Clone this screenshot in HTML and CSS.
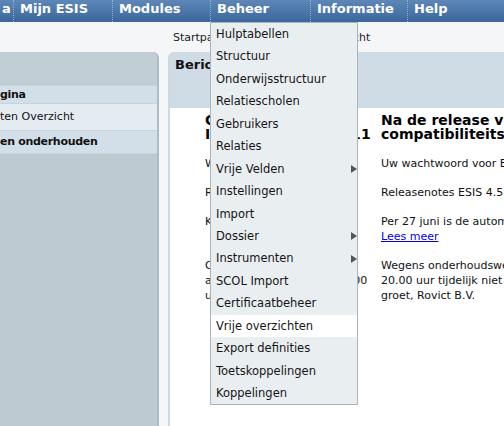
FILE: index.html
```html
<!DOCTYPE html>
<html lang="nl">
<head>
<meta charset="utf-8">
<title>ESIS - Berichten</title>
<link rel="stylesheet" href="styles.css">
</head>
<body>
<nav class="topnav">
  <div class="nav-item nav-first">a</div>
  <div class="nav-item w99">Mijn ESIS</div>
  <div class="nav-item w98">Modules</div>
  <div class="nav-item w100">Beheer
    <div class="dropdown">
      <div class="menu-item">Hulptabellen</div>
      <div class="menu-item">Structuur</div>
      <div class="menu-item">Onderwijsstructuur</div>
      <div class="menu-item">Relatiescholen</div>
      <div class="menu-item">Gebruikers</div>
      <div class="menu-item">Relaties</div>
      <div class="menu-item sub">Vrije Velden</div>
      <div class="menu-item">Instellingen</div>
      <div class="menu-item">Import</div>
      <div class="menu-item sub">Dossier</div>
      <div class="menu-item sub">Instrumenten</div>
      <div class="menu-item">SCOL Import</div>
      <div class="menu-item">Certificaatbeheer</div>
      <div class="menu-item active">Vrije overzichten</div>
      <div class="menu-item">Export definities</div>
      <div class="menu-item">Toetskoppelingen</div>
      <div class="menu-item">Koppelingen</div>
    </div>
  </div>
  <div class="nav-item w97">Informatie</div>
  <div class="nav-item">Help</div>
</nav>
<div class="crumbs">Startpagina &raquo; Berichten &raquo; Overzicht</div>
<div class="layout">
  <aside class="sidebar">
    <div class="side-head"></div>
    <div class="side-row r1">gina</div>
    <div class="side-row r2">ten Overzicht</div>
    <div class="side-row r3">en onderhouden</div>
  </aside>
  <div class="gutter"></div>
  <main class="panel">
    <div class="panel-head">Berichten</div>
    <div class="news">
      <div class="col col-left">
        <h2 class="news-title">Compatibiliteit<br><span class="spread">Internet Explorer 11</span></h2>
        <p>Welkom in ESIS</p>
        <p>Roosterwijzigingen</p>
        <p class="tall">Kalender bijgewerkt</p>
        <p>Cito-koppeling is maandag<br><span class="spread-sm">aanstaande van 18 tot 20.00</span><br>uur niet beschikbaar.</p>
      </div>
      <div class="col col-right">
        <h2 class="news-title">Na de release van ESIS 4.5.1 is de<br>compatibiliteitsweergave niet meer nodig</h2>
        <p>Uw wachtwoord voor ESIS verloopt binnenkort.</p>
        <p>Releasenotes ESIS 4.5.1</p>
        <p>Per 27 juni is de automatische koppeling actief.<br><a class="link" href="#">Lees meer</a></p>
        <p>Wegens onderhoudswerkzaamheden is ESIS op vrijdag van 18.00 tot<br>20.00 uur tijdelijk niet beschikbaar. Met vriendelijke<br>groet, Rovict B.V.</p>
      </div>
    </div>
  </main>
</div>
</body>
</html>
```
FILE: styles.css
```css
html, body {
  margin: 0;
  padding: 0;
}
body {
  font-family: "DejaVu Sans", Verdana, sans-serif;
  font-size: 11px;
  color: #111;
  background: #f4f6f8;
  width: 504px;
  height: 426px;
  overflow: hidden;
}
.topnav {
  display: flex;
  height: 22px;
  background: linear-gradient(#5d87b7, #3a669c);
  position: relative;
  z-index: 5;
}
.nav-item {
  flex: none;
  box-sizing: border-box;
  border-left: 1px dotted #93b0d0;
  padding-left: 6px;
  color: #fff;
  font-weight: bold;
  font-size: 13px;
  line-height: 17px;
  position: relative;
  white-space: nowrap;
}
.nav-first {
  width: 13px;
  border-left: none;
  padding-left: 2px;
}
.w99 { width: 99px; }
.w98 { width: 98px; }
.w100 { width: 100px; }
.w97 { width: 97px; }

.dropdown {
  position: absolute;
  top: 22px;
  left: -1px;
  width: 146px;
  border: 1px solid #a9b4bc;
  background: #e9eef1;
  z-index: 10;
}
.menu-item {
  height: 22.44px;
  line-height: 22.44px;
  padding-left: 5px;
  font-size: 11.5px;
  font-weight: normal;
  color: #151515;
  position: relative;
}
.menu-item.active {
  background: #fff;
}
.menu-item.sub::after {
  content: "";
  position: absolute;
  right: 0;
  top: 50%;
  margin-top: -4px;
  border-left: 6px solid #555;
  border-top: 4px solid transparent;
  border-bottom: 4px solid transparent;
}

.crumbs {
  height: 30px;
  box-sizing: border-box;
  padding: 9px 0 0 173px;
  line-height: 14px;
  color: #1a1a1a;
  white-space: nowrap;
}

.layout {
  display: flex;
  height: 374px;
}
.sidebar {
  flex: none;
  width: 157px;
  border-right: 2px solid #b0bcc4;
  background: #bdcad2;
  border-top-right-radius: 6px;
  overflow: hidden;
}
.side-head {
  height: 33px;
  background: #c2ced6;
}
.side-row {
  border-top: 1px solid #c8d4dc;
  white-space: nowrap;
  color: #111;
}
.r1 {
  height: 17px;
  line-height: 17px;
  background: #d3dfe8;
  font-weight: bold;
  letter-spacing: -0.3px;
}
.r2 {
  height: 26px;
  line-height: 26px;
  background: #e5ecf1;
}
.r3 {
  height: 22px;
  line-height: 22px;
  background: #d3dfe8;
  font-weight: bold;
  letter-spacing: -0.3px;
  border-bottom: 1px solid #c8d4dc;
}
.gutter {
  flex: none;
  width: 9px;
}
.panel {
  flex: none;
  width: 600px;
  border-left: 2px solid #cdd8e0;
  background: #fff;
  border-top-left-radius: 6px;
}
.panel-head {
  height: 56px;
  box-sizing: border-box;
  background: #cfdce6;
  border-top-left-radius: 4px;
  padding: 5px 0 0 5px;
  font-weight: bold;
  font-size: 13px;
  line-height: 15px;
  color: #111;
}
.news {
  display: flex;
  gap: 11px;
  padding: 5px 0 0 35px;
}
.col {
  flex: none;
  white-space: nowrap;
}
.col-left {
  width: 165px;
}
.col-right {
  width: 400px;
}
.news-title {
  margin: 0 0 15px;
  font-size: 14px;
  line-height: 14px;
  font-weight: bold;
  color: #000;
}
.spread {
  letter-spacing: 0.3px;
}
.spread-sm {
  letter-spacing: 0.1px;
}
.col p {
  margin: 14px 0 0;
  line-height: 15px;
}
.col .news-title + p {
  margin-top: 0;
}
.col p.tall {
  padding-bottom: 15px;
}
.link {
  color: #0000ee;
  text-decoration: underline;
}
```
